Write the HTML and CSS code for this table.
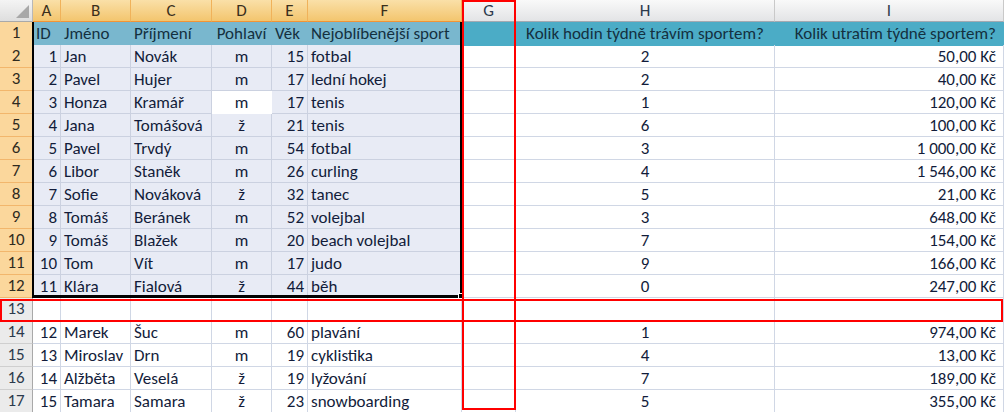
FILE: index.html
```html
<!DOCTYPE html>
<html lang="cs">
<head>
<meta charset="utf-8">
<title>Sport</title>
<link rel="stylesheet" href="styles.css">
</head>
<body>
<div class="sheet">
  <div class="row colhead">
    <div class="corner"></div>
    <div class="ch on">A</div>
    <div class="ch on">B</div>
    <div class="ch on">C</div>
    <div class="ch on">D</div>
    <div class="ch on">E</div>
    <div class="ch on">F</div>
    <div class="ch">G</div>
    <div class="ch">H</div>
    <div class="ch">I</div>
  </div>

  <div class="row">
    <div class="rh on">1</div>
    <div class="c th hs">ID</div>
    <div class="c th hs">Jméno</div>
    <div class="c th hs">Příjmení</div>
    <div class="c th hs ctr">Pohlaví</div>
    <div class="c th hs">Věk</div>
    <div class="c th hs">Nejoblíbenější sport</div>
    <div class="c th"></div>
    <div class="c th ctr">Kolik hodin týdně trávím sportem?</div>
    <div class="c th r">Kolik utratím týdně sportem?</div>
  </div>

  <div class="row">
    <div class="rh on">2</div>
    <div class="c s r">1</div><div class="c s">Jan</div><div class="c s">Novák</div><div class="c s ctr">m</div><div class="c s r">15</div><div class="c s">fotbal</div>
    <div class="c"></div><div class="c ctr">2</div><div class="c r">50,00 Kč</div>
  </div>
  <div class="row">
    <div class="rh on">3</div>
    <div class="c s r">2</div><div class="c s">Pavel</div><div class="c s">Hujer</div><div class="c s ctr">m</div><div class="c s r">17</div><div class="c s">lední hokej</div>
    <div class="c"></div><div class="c ctr">2</div><div class="c r">40,00 Kč</div>
  </div>
  <div class="row">
    <div class="rh on">4</div>
    <div class="c s r">3</div><div class="c s">Honza</div><div class="c s">Kramář</div><div class="c active ctr">m</div><div class="c s r">17</div><div class="c s">tenis</div>
    <div class="c"></div><div class="c ctr">1</div><div class="c r">120,00 Kč</div>
  </div>
  <div class="row">
    <div class="rh on">5</div>
    <div class="c s r">4</div><div class="c s">Jana</div><div class="c s">Tomášová</div><div class="c s ctr">ž</div><div class="c s r">21</div><div class="c s">tenis</div>
    <div class="c"></div><div class="c ctr">6</div><div class="c r">100,00 Kč</div>
  </div>
  <div class="row">
    <div class="rh on">6</div>
    <div class="c s r">5</div><div class="c s">Pavel</div><div class="c s">Trvdý</div><div class="c s ctr">m</div><div class="c s r">54</div><div class="c s">fotbal</div>
    <div class="c"></div><div class="c ctr">3</div><div class="c r">1 000,00 Kč</div>
  </div>
  <div class="row">
    <div class="rh on">7</div>
    <div class="c s r">6</div><div class="c s">Libor</div><div class="c s">Staněk</div><div class="c s ctr">m</div><div class="c s r">26</div><div class="c s">curling</div>
    <div class="c"></div><div class="c ctr">4</div><div class="c r">1 546,00 Kč</div>
  </div>
  <div class="row">
    <div class="rh on">8</div>
    <div class="c s r">7</div><div class="c s">Sofie</div><div class="c s">Nováková</div><div class="c s ctr">ž</div><div class="c s r">32</div><div class="c s">tanec</div>
    <div class="c"></div><div class="c ctr">5</div><div class="c r">21,00 Kč</div>
  </div>
  <div class="row">
    <div class="rh on">9</div>
    <div class="c s r">8</div><div class="c s">Tomáš</div><div class="c s">Beránek</div><div class="c s ctr">m</div><div class="c s r">52</div><div class="c s">volejbal</div>
    <div class="c"></div><div class="c ctr">3</div><div class="c r">648,00 Kč</div>
  </div>
  <div class="row">
    <div class="rh on">10</div>
    <div class="c s r">9</div><div class="c s">Tomáš</div><div class="c s">Blažek</div><div class="c s ctr">m</div><div class="c s r">20</div><div class="c s">beach volejbal</div>
    <div class="c"></div><div class="c ctr">7</div><div class="c r">154,00 Kč</div>
  </div>
  <div class="row">
    <div class="rh on">11</div>
    <div class="c s r">10</div><div class="c s">Tom</div><div class="c s">Vít</div><div class="c s ctr">m</div><div class="c s r">17</div><div class="c s">judo</div>
    <div class="c"></div><div class="c ctr">9</div><div class="c r">166,00 Kč</div>
  </div>
  <div class="row">
    <div class="rh on">12</div>
    <div class="c s r">11</div><div class="c s">Klára</div><div class="c s">Fialová</div><div class="c s ctr">ž</div><div class="c s r">44</div><div class="c s">běh</div>
    <div class="c"></div><div class="c ctr">0</div><div class="c r">247,00 Kč</div>
  </div>
  <div class="row">
    <div class="rh">13</div>
    <div class="c"></div><div class="c"></div><div class="c"></div><div class="c"></div><div class="c"></div><div class="c"></div>
    <div class="c"></div><div class="c"></div><div class="c"></div>
  </div>
  <div class="row">
    <div class="rh">14</div>
    <div class="c r">12</div><div class="c">Marek</div><div class="c">Šuc</div><div class="c ctr">m</div><div class="c r">60</div><div class="c">plavání</div>
    <div class="c"></div><div class="c ctr">1</div><div class="c r">974,00 Kč</div>
  </div>
  <div class="row">
    <div class="rh">15</div>
    <div class="c r">13</div><div class="c">Miroslav</div><div class="c">Drn</div><div class="c ctr">m</div><div class="c r">19</div><div class="c">cyklistika</div>
    <div class="c"></div><div class="c ctr">4</div><div class="c r">13,00 Kč</div>
  </div>
  <div class="row">
    <div class="rh">16</div>
    <div class="c r">14</div><div class="c">Alžběta</div><div class="c">Veselá</div><div class="c ctr">ž</div><div class="c r">19</div><div class="c">lyžování</div>
    <div class="c"></div><div class="c ctr">7</div><div class="c r">189,00 Kč</div>
  </div>
  <div class="row">
    <div class="rh">17</div>
    <div class="c r">15</div><div class="c">Tamara</div><div class="c">Samara</div><div class="c ctr">ž</div><div class="c r">23</div><div class="c">snowboarding</div>
    <div class="c"></div><div class="c ctr">5</div><div class="c r">355,00 Kč</div>
  </div>

  <div class="selection"><span class="handle"></span></div>
  <div class="mark mark-col"></div>
  <div class="mark mark-row"></div>
</div>
</body>
</html>
```

FILE: styles.css
```css
html, body {
  margin: 0;
  padding: 0;
  background: #ffffff;
}

.sheet {
  position: relative;
  width: 1004px;
  height: 412px;
  overflow: hidden;
  font-family: Carlito, Lato, "Liberation Sans", sans-serif;
  font-size: 17px;
  color: #121c3a;
}

.row {
  display: grid;
  grid-template-columns: 33px 28px 70px 81px 60px 36px 154px 54px 259px 229px;
  height: 23px;
}

.row.colhead {
  height: 22px;
}

/* column header */
.corner {
  position: relative;
  background: linear-gradient(#f4f4f4, #dedede);
  border-right: 1px solid #b8b8b8;
  border-bottom: 1px solid #a9a9a9;
}
.corner::after {
  content: "";
  position: absolute;
  right: 3px;
  bottom: 3px;
  width: 0;
  height: 0;
  border-left: 13px solid transparent;
  border-bottom: 13px solid #a8a8a8;
}

.ch {
  box-sizing: border-box;
  background: linear-gradient(#f9f9f9, #e3e4e6);
  border-right: 1px solid #c9c9c9;
  border-bottom: 1px solid #a3a9b1;
  text-align: center;
  line-height: 21px;
  color: #2c3a4c;
}
.ch.on {
  background: linear-gradient(#fae0a8, #f3c56e);
  border-right-color: #f0b25a;
  border-bottom-color: #f29436;
  color: #3a2f1c;
}

/* row header */
.rh {
  box-sizing: border-box;
  background: #ebebeb;
  border-right: 1px solid #a9a9a9;
  border-bottom: 1px solid #cfcfcf;
  text-align: center;
  line-height: 22px;
  color: #2c3a4c;
}
.rh.on {
  background: #fbd79c;
  border-right-color: #f29436;
  border-bottom-color: #f2b66c;
  color: #2e2a20;
}

/* cells */
.c {
  box-sizing: border-box;
  border-right: 1px solid #d0d7e5;
  border-bottom: 1px solid #d0d7e5;
  padding: 0 3px;
  line-height: 23px;
  white-space: nowrap;
  overflow: hidden;
}
.c.r { text-align: right; }
.c.ctr { text-align: center; }
.row .c:last-child.r { padding-right: 7px; }

.c.s {
  background: #e8ebf5;
  border-color: #cbd1e0;
}
.c.active {
  background: #ffffff;
  border-color: #ffffff;
}

.c.th {
  background: #4bacc6;
  border-right-color: #4bacc6;
  border-bottom-color: #4bacc6;
  color: #14303f;
  overflow: visible;
}
.c.th.hs {
  background: #79b7ce;
  border-right-color: #79b7ce;
  border-bottom-color: #79b7ce;
}

/* overlays */
.selection {
  position: absolute;
  left: 32px;
  top: 22px;
  width: 430px;
  height: 276px;
  box-sizing: border-box;
  border-left: 2px solid #000;
  border-right: 2px solid #000;
  border-bottom: 3px solid #000;
}
.handle {
  position: absolute;
  right: -4px;
  bottom: -4px;
  width: 4px;
  height: 4px;
  background: #000;
  border: 1px solid #fff;
}

.mark {
  position: absolute;
  box-sizing: border-box;
  border: 2px solid #ff0000;
}
.mark-col {
  left: 462px;
  top: 0;
  width: 54px;
  height: 410px;
}
.mark-row {
  left: 0;
  top: 299px;
  width: 1003px;
  height: 23px;
}
```
